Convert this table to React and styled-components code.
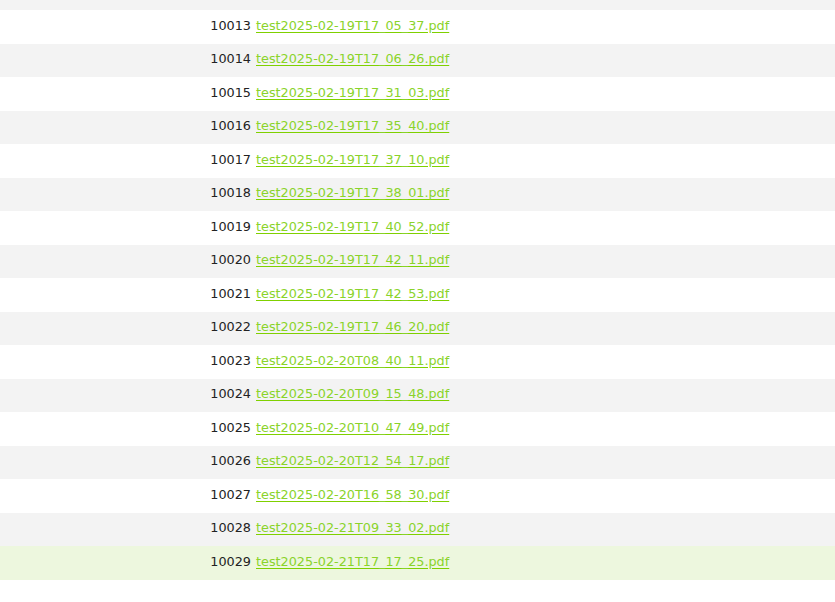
import styled, { createGlobalStyle } from "styled-components";

const GlobalStyle = createGlobalStyle`
    html, body {
        margin: 0;
        padding: 0;
        background: #fff;
        overflow: hidden;
    }
`;

const files = [
    [10013, "test2025-02-19T17_05_37.pdf"],
    [10014, "test2025-02-19T17_06_26.pdf"],
    [10015, "test2025-02-19T17_31_03.pdf"],
    [10016, "test2025-02-19T17_35_40.pdf"],
    [10017, "test2025-02-19T17_37_10.pdf"],
    [10018, "test2025-02-19T17_38_01.pdf"],
    [10019, "test2025-02-19T17_40_52.pdf"],
    [10020, "test2025-02-19T17_42_11.pdf"],
    [10021, "test2025-02-19T17_42_53.pdf"],
    [10022, "test2025-02-19T17_46_20.pdf"],
    [10023, "test2025-02-20T08_40_11.pdf"],
    [10024, "test2025-02-20T09_15_48.pdf"],
    [10025, "test2025-02-20T10_47_49.pdf"],
    [10026, "test2025-02-20T12_54_17.pdf"],
    [10027, "test2025-02-20T16_58_30.pdf"],
    [10028, "test2025-02-21T09_33_02.pdf"],
    [10029, "test2025-02-21T17_17_25.pdf"],
];

const App = () => {
    return (
        <>
            <GlobalStyle />
            <List>
                {/* tail of the row scrolled above the viewport */}
                <PrevRowEdge />
                {files.map(([id, name], i) => (
                    <Row key={id} $striped={i % 2 === 1} $current={id === 10029}>
                        <Id>{id}</Id>
                        <FileLink href="#">{name}</FileLink>
                    </Row>
                ))}
            </List>
        </>
    );
};

export default App;

const List = styled.div`
    font-family: "DejaVu Sans", Verdana, sans-serif;
    font-size: 12.8px;
`;

const PrevRowEdge = styled.div`
    height: 10px;
    background: #f3f3f3;
`;

const Row = styled.div`
    display: grid;
    grid-template-columns: 251px 1fr;
    column-gap: 5px;
    align-items: center;
    height: 33.5px;
    background: ${(p) => (p.$current ? "#edf7de" : p.$striped ? "#f3f3f3" : "#fff")};
`;

const Id = styled.span`
    text-align: right;
    color: #222;
    padding-bottom: 3px;
`;

const FileLink = styled.a`
    justify-self: start;
    color: #8ad32a;
    text-decoration: underline;
    text-decoration-color: #7fd000;
    text-underline-offset: 2px;
    padding-bottom: 3px;
`;
